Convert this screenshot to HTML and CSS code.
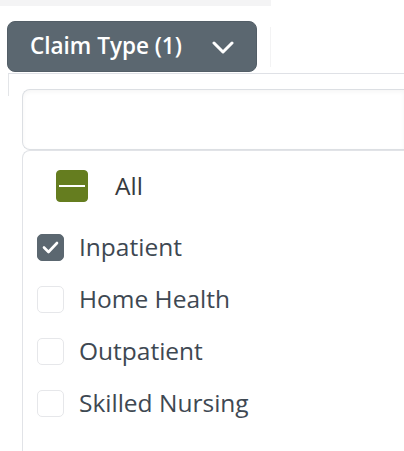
FILE: index.html
```html
<!DOCTYPE html>
<html>
<head>
<meta charset="utf-8">
<link rel="stylesheet" href="styles.css">
</head>
<body>
<div class="topstrip"></div>
<div class="header">
  <button class="filter-btn">
    <span class="filter-label">Claim Type (1)</span>
    <svg class="chevron" width="22" height="13" viewBox="0 0 22 13"><path d="M2 2 L11 11 L20 2" fill="none" stroke="#fff" stroke-width="3" stroke-linecap="round" stroke-linejoin="round"/></svg>
  </button>
  <div class="divider"></div>
</div>
<div class="panel">
  <div class="search"></div>
  <div class="list">
    <div class="row row-all">
      <span class="box box-partial"><span class="dash"></span></span>
      <span class="label label-all">All</span>
    </div>
    <div class="row">
      <span class="box box-checked">
        <svg width="17" height="13" viewBox="0 0 17 13"><path d="M2 6.5 L6.5 11 L15 2" fill="none" stroke="#fff" stroke-width="2.6" stroke-linecap="round" stroke-linejoin="round"/></svg>
      </span>
      <span class="label">Inpatient</span>
    </div>
    <div class="row">
      <span class="box"></span>
      <span class="label">Home Health</span>
    </div>
    <div class="row">
      <span class="box"></span>
      <span class="label">Outpatient</span>
    </div>
    <div class="row">
      <span class="box"></span>
      <span class="label">Skilled Nursing</span>
    </div>
  </div>
</div>
</body>
</html>
```
FILE: styles.css
```css
html, body {
  margin: 0;
  padding: 0;
  background: #fff;
  overflow: hidden;
  width: 404px;
  height: 451px;
  font-family: "Open Sans", "Noto Sans", sans-serif;
}
.topstrip {
  width: 271px;
  height: 6px;
  background: #f4f4f5;
}
.header {
  display: flex;
  align-items: center;
  margin-top: 15px;
  padding-left: 7px;
}
.filter-btn {
  box-sizing: border-box;
  width: 250px;
  height: 51px;
  display: flex;
  align-items: center;
  justify-content: space-between;
  padding: 0 22px 0 22px;
  background: #5b6770;
  border: 1px solid #535e67;
  border-radius: 8px;
  color: #fff;
  font-family: "Open Sans", sans-serif;
  font-weight: 600;
  font-size: 22.5px;
  cursor: pointer;
}
.filter-label {
  line-height: 1;
}
.chevron {
  display: block;
  margin-top: 2px;
}
.divider {
  width: 1px;
  height: 40px;
  margin-left: 13px;
  background: #f3f3f4;
}
.panel {
  margin-left: 8px;
  margin-top: 1px;
  border-top: 1px solid #dfe1e6;
  padding: 15px 0 0 14px;
  background: linear-gradient(#e3e5e8, #e3e5e8) 0 0 / 1px 22px no-repeat;
}
.search {
  box-sizing: border-box;
  height: 61px;
  border: 1px solid #dcdfe3;
  border-right: none;
  border-radius: 8px 0 0 8px;
  box-shadow: inset 0 2px 4px rgba(0,0,0,0.04);
}
.list {
  box-sizing: border-box;
  height: 320px;
  border-top: 1px solid #e1e3e7;
  border-left: 1px solid #e1e3e7;
  border-top-left-radius: 8px;
  padding: 19px 0 0 14px;
}
.row {
  display: flex;
  align-items: center;
  height: 27px;
  margin-bottom: 25px;
}
.row-all {
  height: 32px;
  margin-left: 19px;
  margin-bottom: 32px;
}
.box {
  box-sizing: border-box;
  width: 27px;
  height: 27px;
  border: 1px solid #e6e7ea;
  border-radius: 5px;
  display: flex;
  align-items: center;
  justify-content: center;
  flex: none;
}
.box-checked {
  background: #5b6770;
  border-color: #5b6770;
}
.box-partial {
  width: 32px;
  height: 32px;
  background: #657d1f;
  border-color: #657d1f;
  border-radius: 4px;
}
.dash {
  width: 26px;
  height: 2px;
  background: #fff;
}
.label {
  margin-left: 15px;
  font-size: 24.5px;
  line-height: 1;
  color: #3e4852;
}
.label-all {
  margin-left: 27px;
  color: #363a3e;
}
```
